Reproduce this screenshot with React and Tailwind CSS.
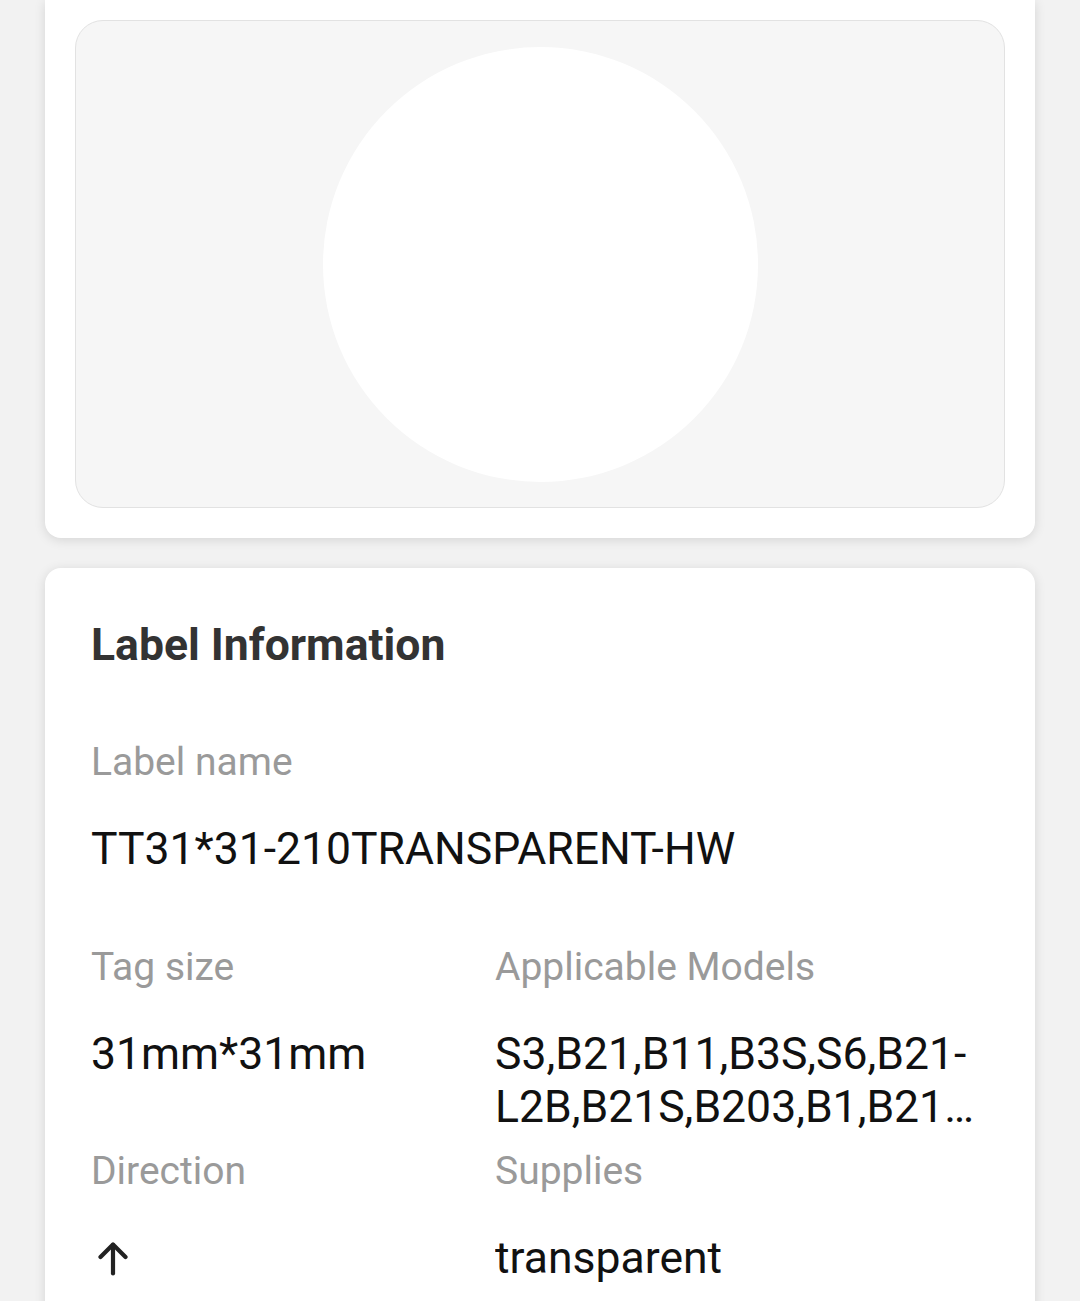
import { Fragment } from "react";

const fields = [
  [
    { label: "Tag size", value: "31mm*31mm" },
    { label: "Applicable Models", value: "S3,B21,B11,B3S,S6,B21-L2B,B21S,B203,B1,B21 C2B,B3S-P,B1-P,B21-P" },
  ],
  [
    { label: "Direction", icon: true },
    { label: "Supplies", value: "transparent" },
  ],
];

function ArrowUp() {
  return (
    <svg viewBox="0 0 30 34" className="h-[34px] w-[30px]" fill="none" stroke="#222" strokeWidth="4.2" strokeLinecap="round" strokeLinejoin="round">
      <path d="M15 31.5V3" />
      <path d="M2.5 15 15 2.5 27.5 15" />
    </svg>
  );
}

function Field({ label, value, icon }) {
  return (
    <div className="mb-[12px] min-w-0">
      <div className="text-[39px] leading-[50px] text-[#9a9a9a]">{label}</div>
      <div className="mt-[36px] text-[44.5px] leading-[53px] text-[#111]">
        {icon ? (
          <span className="flex h-[53px] items-center pl-[7px]">
            <ArrowUp />
          </span>
        ) : (
          <span className="line-clamp-2 break-words">{value}</span>
        )}
      </div>
    </div>
  );
}

export default function App() {
  return (
    <div className="min-h-screen bg-[#f2f2f2] px-[45px] pb-[40px]" style={{ fontFamily: "Roboto, 'Noto Sans', sans-serif" }}>
      <div className="rounded-b-2xl bg-white px-[30px] pb-[30px] pt-[20px] shadow-[0_2px_12px_rgba(0,0,0,0.12)]">
        <div className="flex h-[488px] items-center justify-center rounded-[28px] border border-[#e2e2e2] bg-[#f6f6f6]">
          <div className="h-[435px] w-[435px] rounded-full bg-white" />
        </div>
      </div>

      <div className="mt-[30px] rounded-2xl bg-white px-[46px] pb-[60px] pt-[47px] shadow-[0_2px_12px_rgba(0,0,0,0.12)]">
        <h2 className="text-[44.5px] font-bold leading-[60px] text-[#333]">Label Information</h2>

        <div className="mt-[62px]">
          <div className="text-[39px] leading-[50px] text-[#9a9a9a]">Label name</div>
          <div className="mt-[36px] text-[44.5px] leading-[53px] text-[#111]">TT31*31-210TRANSPARENT-HW</div>
        </div>

        <div className="mt-[66px] grid grid-cols-[404px_1fr]">
          {fields.map((row, i) => (
            <Fragment key={i}>
              {row.map((f) => (
                <Field key={f.label} {...f} />
              ))}
            </Fragment>
          ))}
        </div>
      </div>
    </div>
  );
}
